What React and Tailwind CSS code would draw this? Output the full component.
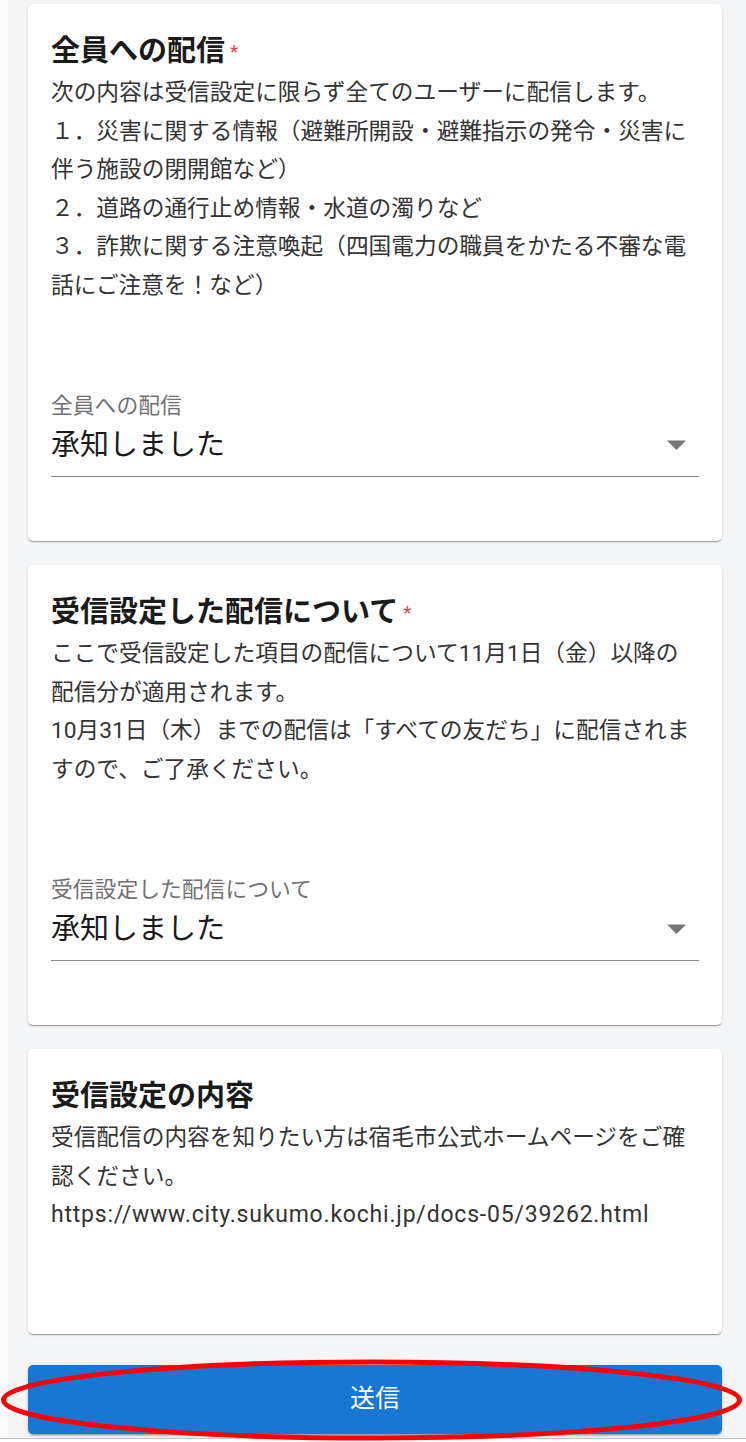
import React from "react";

const FONT = { fontFamily: 'Roboto, "Noto Sans CJK JP", "Noto Sans", sans-serif' };

function Title({ children, required }) {
  return (
    <h2 className="text-[29px] font-bold leading-[42px] text-[#1a1a1a]">
      {children}
      {required && (
        <span className="ml-[5px] text-[19px] font-normal text-[#e0463f] align-top relative top-[1px]">*</span>
      )}
    </h2>
  );
}

function Body({ lines }) {
  return (
    <div className="mt-[2px] text-[22.7px] leading-[38.5px] text-[#333333]">
      {lines.map((l, i) => (
        <p key={i} className="whitespace-nowrap">
          {l}
        </p>
      ))}
    </div>
  );
}

function SelectField({ label }) {
  return (
    <div className="mt-[86px]">
      <div className="text-[21.8px] leading-[30px] text-[#707070]">{label}</div>
      <div className="mt-[4px] flex items-center border-b border-[#8a8a8a] pb-[11px]">
        <span className="flex-1 text-[29px] leading-[40px] text-[#1a1a1a]">承知しました</span>
        <svg width="19" height="10" viewBox="0 0 19 10" className="mr-[13px]">
          <polygon points="0,0.5 19,0.5 9.5,10" fill="#757575" />
        </svg>
      </div>
    </div>
  );
}

function Card({ children, pb }) {
  return (
    <div
      className={`rounded-[5px] bg-white pl-[23px] pr-[23px] pt-[26px] shadow-[0_2px_1px_-1px_rgba(0,0,0,0.2),0_1px_1px_0_rgba(0,0,0,0.14),0_1px_3px_0_rgba(0,0,0,0.12)] ${pb}`}
    >
      {children}
    </div>
  );
}

export default function App() {
  return (
    <div className="relative flex h-[1442px] w-[746px] overflow-hidden bg-[#f4f5f7]" style={FONT}>
      <div className="w-[8px] shrink-0 bg-[#fafafb]" />
      <div className="flex flex-1 flex-col pl-[20px] pr-[24px] pt-[4px]">
        <Card pb="pb-[64px]">
          <Title required>全員への配信</Title>
          <Body
            lines={[
              "次の内容は受信設定に限らず全てのユーザーに配信します。",
              "１．災害に関する情報（避難所開設・避難指示の発令・災害に",
              "伴う施設の閉開館など）",
              "２．道路の通行止め情報・水道の濁りなど",
              "３．詐欺に関する注意喚起（四国電力の職員をかたる不審な電",
              "話にご注意を！など）",
            ]}
          />
          <SelectField label="全員への配信" />
        </Card>

        <div className="mt-[24px]">
          <Card pb="pb-[64px]">
            <Title required>受信設定した配信について</Title>
            <Body
              lines={[
                "ここで受信設定した項目の配信について11月1日（金）以降の",
                "配信分が適用されます。",
                "10月31日（木）までの配信は「すべての友だち」に配信されま",
                "すので、ご了承ください。",
              ]}
            />
            <SelectField label="受信設定した配信について" />
          </Card>
        </div>

        <div className="mt-[24px]">
          <Card pb="pb-[99px]">
            <Title>受信設定の内容</Title>
            <div className="mt-[2px] text-[22.7px] leading-[38.5px] text-[#333333]">
              <p className="whitespace-nowrap">受信配信の内容を知りたい方は宿毛市公式ホームページをご確</p>
              <p className="whitespace-nowrap">認ください。</p>
              <p className="whitespace-nowrap text-[23px] tracking-[0.8px]">
                https://www.city.sukumo.kochi.jp/docs-05/39262.html
              </p>
            </div>
          </Card>
        </div>

        <button className="mt-[31px] flex h-[69px] w-full items-center justify-center rounded-[5px] bg-[#1976d2] text-[25px] text-white shadow-[0_3px_1px_-2px_rgba(0,0,0,0.2),0_2px_2px_0_rgba(0,0,0,0.14),0_1px_5px_0_rgba(0,0,0,0.12)]">
          送信
        </button>
      </div>

      <div className="absolute bottom-[3px] left-0 h-[1px] w-full bg-[#c4c4c4]" />
      <div className="absolute bottom-0 left-0 h-[3px] w-full bg-white" />

      <svg className="pointer-events-none absolute left-0 top-[1358px]" width="746" height="84" viewBox="0 0 746 84">
        <ellipse cx="371.5" cy="42" rx="368" ry="38" fill="none" stroke="#ff0000" strokeWidth="5" />
      </svg>
    </div>
  );
}
